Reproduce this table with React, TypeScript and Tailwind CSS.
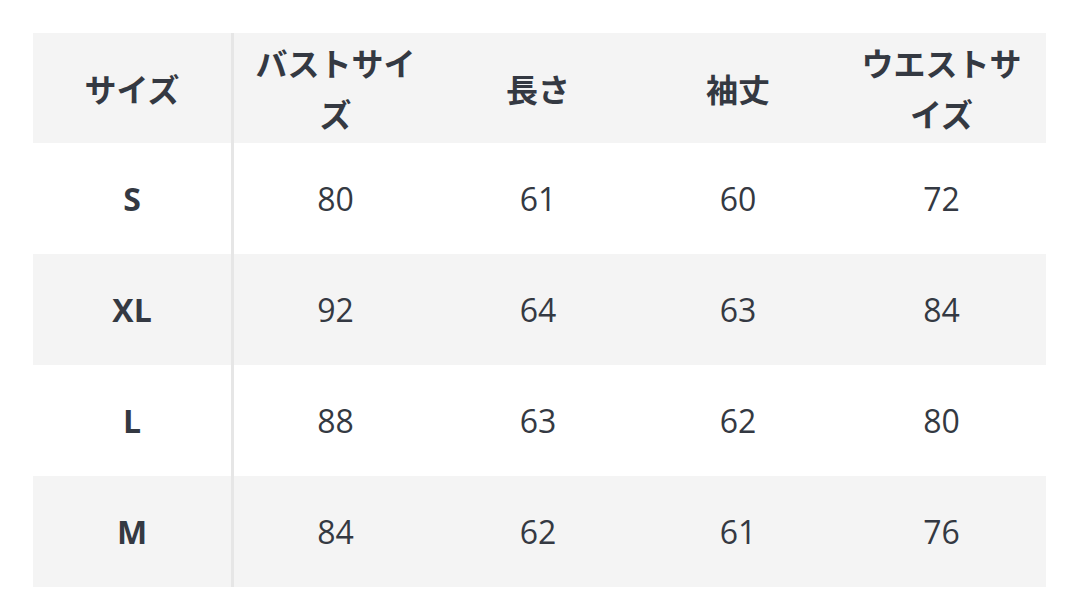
import React from "react";

const headers = ["サイズ", "バストサイズ", "長さ", "袖丈", "ウエストサイズ"];
const rows: [string, string, string, string, string][] = [
  ["S", "80", "61", "60", "72"],
  ["XL", "92", "64", "63", "84"],
  ["L", "88", "63", "62", "80"],
  ["M", "84", "62", "61", "76"],
];

const jp = "font-['Noto_Sans_CJK_JP','Noto_Sans',sans-serif]";
const num = "font-['Open_Sans','Noto_Sans',sans-serif]";
const cols = "grid grid-cols-[201px_203px_202px_198px_1fr]";

export default function App() {
  return (
    <div className="w-[1080px] h-[593px] bg-white pt-[33px]">
      <div className="ml-[33px] w-[1013px] text-[#343942]">
        <div className={`${cols} h-[110px] bg-[#f4f4f4]`}>
          {headers.map((h, i) => (
            <div
              key={i}
              className={`flex items-center justify-center text-center px-4 text-[32px] leading-[51px] font-bold ${jp} ${
                i === 0 ? "border-r-[3px] border-[#e6e6e6]" : ""
              }`}
            >
              {h}
            </div>
          ))}
        </div>
        {rows.map((r, ri) => (
          <div
            key={ri}
            className={`${cols} h-[111px] ${
              ri % 2 === 1 ? "bg-[#f4f4f4]" : "bg-white"
            }`}
          >
            {r.map((c, ci) => (
              <div
                key={ci}
                className={`flex items-center justify-center text-[32px] ${num} ${
                  ci === 0 ? "font-bold border-r-[3px] border-[#e6e6e6]" : "font-normal"
                }`}
              >
                {c}
              </div>
            ))}
          </div>
        ))}
      </div>
    </div>
  );
}
